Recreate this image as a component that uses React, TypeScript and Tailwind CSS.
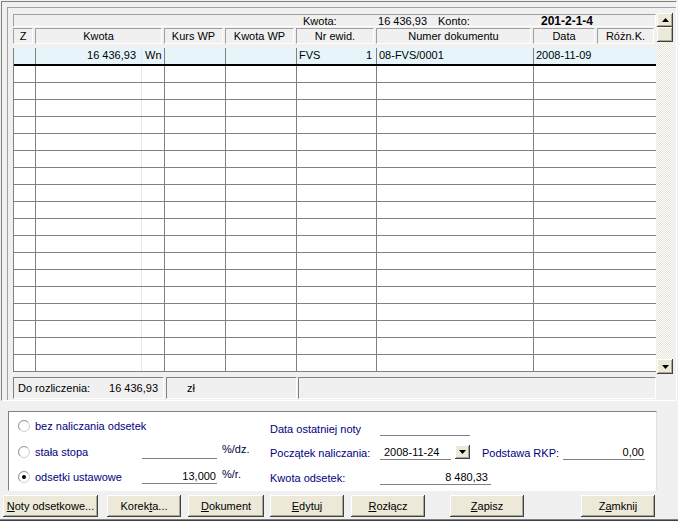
import React from "react";

const headers = [
  { label: "Z", w: "w-[22px]" },
  { label: "Kwota", w: "w-[129px]" },
  { label: "Kurs WP", w: "w-[61px]" },
  { label: "Kwota WP", w: "w-[71px]" },
  { label: "Nr ewid.", w: "w-[80px]" },
  { label: "Numer dokumentu", w: "w-[157px]" },
  { label: "Data", w: "w-[64px]" },
  { label: "Różn.K.", w: "w-[59px]" },
];

const btn3d =
  "bg-[#ece9d8] shadow-[inset_-1px_-1px_#404040,inset_1px_1px_#ffffff,inset_-2px_-2px_#aca899]";

const Radio = ({ checked }: { checked?: boolean }) => (
  <svg width="12" height="12" viewBox="0 0 12 12">
    <circle cx="6" cy="6" r="5.5" fill="#ffffff" stroke="#d4d0c8" />
    <path d="M2.1 9.9 A5.5 5.5 0 0 1 9.9 2.1" fill="none" stroke="#9a9a9a" />
    {checked && <circle cx="6" cy="6" r="2" fill="#000000" />}
  </svg>
);

const Arrow = ({ up }: { up?: boolean }) => (
  <svg width="7" height="4" viewBox="0 0 7 4">
    <polygon points={up ? "3.5,0 7,4 0,4" : "0,0 7,0 3.5,4"} fill="#000000" />
  </svg>
);

const GridRow = ({ first }: { first?: boolean }) => (
  <div
    className={
      first
        ? "flex h-[18px] bg-[#e7f5fb] border-b-2 border-black"
        : "flex h-[17px] bg-white border-b border-[#808080]"
    }
  >
    <div className="w-[22px] border-r border-[#808080]" />
    <div className="w-[106px] border-r border-[#e8e8e8] text-right pr-[5px] leading-[15px]">
      {first ? "16 436,93" : ""}
    </div>
    <div className="w-[23px] border-r border-[#808080] pl-[3px] leading-[15px]">
      {first ? "Wn" : ""}
    </div>
    <div className="w-[61px] border-r border-[#808080]" />
    <div className="w-[71px] border-r border-[#808080]" />
    <div className="w-[80px] border-r border-[#808080] flex justify-between pl-[2px] pr-[4px] leading-[15px]">
      {first && (
        <>
          <span>FVS</span>
          <span>1</span>
        </>
      )}
    </div>
    <div className="w-[157px] border-r border-[#808080] pl-[2px] leading-[15px]">
      {first ? "08-FVS/0001" : ""}
    </div>
    <div className="w-[122px] pl-[2px] leading-[15px]">{first ? "2008-11-09" : ""}</div>
  </div>
);

const Btn = ({ children, className }: { children: React.ReactNode; className: string }) => (
  <button className={`${btn3d} ${className} h-[22px] text-black text-[11px] flex items-center justify-center`}>
    {children}
  </button>
);

export default function App() {
  const empty = Array.from({ length: 18 });
  return (
    <div className="w-[678px] h-[521px] bg-[#f0f0f0] overflow-hidden flex flex-col font-['Liberation_Sans',Arial,sans-serif] text-[11px] text-black">
      {/* upper group */}
      <div className="h-[401px] pt-px pl-px">
        <div className="w-[676px] h-[400px] border-t border-l border-[#808080] border-r border-r-white border-b border-b-white pt-[5px] pl-[5px]">
          <div className="h-full border-t border-l border-[#a0a0a0] pt-[6px] pl-[5px]">
            <div className="flex">
              <div className="w-[643px] flex flex-col">
                {/* info row */}
                <div className="h-[13px] flex items-center border-t border-l border-[#a0a0a0] border-b border-b-white border-r border-r-white leading-[12px]">
                  <span className="ml-[289px] w-[60px]">Kwota:</span>
                  <span className="w-[64px] text-right">16 436,93</span>
                  <span className="ml-[11px] w-[103px]">Konto:</span>
                  <span className="font-bold text-[12px]">201-2-1-4</span>
                </div>
                {/* header */}
                <div className="flex mt-px h-[16px]">
                  {headers.map((h) => (
                    <div key={h.label} className={`${h.w} pr-[2px]`}>
                      <div className="h-full border-t border-l border-[#a0a0a0] border-b border-b-white border-r border-r-white text-center leading-[14px]">
                        {h.label}
                      </div>
                    </div>
                  ))}
                </div>
                {/* rows */}
                <div className="mt-[4px] border-l border-[#808080]">
                  <GridRow first />
                  {empty.map((_, i) => (
                    <GridRow key={i} />
                  ))}
                </div>
              </div>
              {/* scrollbar */}
              <div className="ml-px -mt-px w-[16px] h-[361px] flex flex-col">
                <div className={`${btn3d} h-[14px] flex items-center justify-center`}>
                  <Arrow up />
                </div>
                <div className={`${btn3d} h-[15px]`} />
                <div className="flex-1 bg-[image:repeating-conic-gradient(#ffffff_0%_25%,#e6e3d6_0%_50%)] bg-[length:2px_2px]" />
                <div className={`${btn3d} h-[15px] flex items-center justify-center`}>
                  <Arrow />
                </div>
              </div>
            </div>
            {/* status */}
            <div className="flex mt-[3px] h-[22px]">
              <div className="w-[151px] flex items-center justify-between pl-[4px] pr-[5px] border-t border-l border-[#808080] border-b border-b-white border-r border-r-white">
                <span>Do rozliczenia:</span>
                <span>16 436,93</span>
              </div>
              <div className="ml-[2px] w-[131px] flex items-center pl-[20px] border-t border-l border-[#808080] border-b border-b-white border-r border-r-white">
                zł
              </div>
              <div className="ml-px w-[358px] border-t border-l border-[#808080] border-b border-b-white border-r border-r-white" />
            </div>
          </div>
        </div>
      </div>

      {/* lower panel */}
      <div className="h-[10px]" />
      <div className="ml-[8px] w-[649px] h-[80px] bg-white border-t border-l border-[#808080] border-b border-b-white border-r border-r-[#e0e0e0] flex text-[#000080]">
        <div className="w-[261px] flex flex-col">
          <div className="h-[21px] flex items-end">
            <div className="h-[14px] flex items-center pl-[9px]">
              <Radio />
            </div>
            <span className="ml-[5px] leading-[14px]">bez naliczania odsetek</span>
          </div>
          <div className="h-[26px] flex items-end">
            <div className="h-[14px] flex items-center pl-[9px]">
              <Radio />
            </div>
            <span className="ml-[5px] w-[107px] leading-[14px]">stała stopa</span>
            <div className="w-[75px] h-[15px] border-b border-[#808080]" />
            <span className="ml-[5px] mb-[4px] leading-[11px] text-[#000040]">%/dz.</span>
          </div>
          <div className="h-[25px] flex items-end">
            <div className="h-[14px] flex items-center pl-[9px]">
              <Radio checked />
            </div>
            <span className="ml-[5px] w-[107px] leading-[14px]">odsetki ustawowe</span>
            <div className="w-[75px] h-[15px] border-b border-[#808080] text-right text-black leading-[14px] pr-px">
              13,000
            </div>
            <span className="ml-[5px] mb-[4px] leading-[11px] text-[#000040]">%/r.</span>
          </div>
        </div>
        <div className="flex flex-col">
          <div className="h-[24px] flex items-end">
            <span className="w-[110px] leading-[14px]">Data ostatniej noty</span>
            <div className="w-[90px] h-[15px] border-b border-[#808080]" />
          </div>
          <div className="h-[24px] flex items-end">
            <span className="w-[110px] leading-[14px]">Początek naliczania:</span>
            <div className="w-[71px] h-[15px] border-b border-[#808080] pl-[4px] text-black leading-[14px]">
              2008-11-24
            </div>
            <div className={`${btn3d} ml-[4px] mb-px w-[15px] h-[14px] flex items-center justify-center`}>
              <Arrow />
            </div>
            <span className="ml-[12px] w-[81px] leading-[14px]">Podstawa RKP:</span>
            <div className="w-[82px] h-[15px] border-b border-[#808080] text-right pr-px text-black leading-[14px]">
              0,00
            </div>
          </div>
          <div className="h-[25px] flex items-end">
            <span className="w-[110px] leading-[14px]">Kwota odsetek:</span>
            <div className="w-[111px] h-[15px] border-b border-[#808080] text-right pr-[3px] text-black leading-[14px]">
              8 480,33
            </div>
          </div>
        </div>
      </div>

      {/* buttons */}
      <div className="h-[4px]" />
      <div className="flex pl-[3px] h-[22px]">
        <Btn className="w-[95px]">
          <span><u>N</u>oty odsetkowe...</span>
        </Btn>
        <Btn className="ml-[9px] w-[74px]">
          <span>Korek<u>t</u>a...</span>
        </Btn>
        <Btn className="ml-[7px] w-[76px]">
          <span><u>D</u>okument</span>
        </Btn>
        <Btn className="ml-[6px] w-[74px]">
          <span><u>E</u>dytuj</span>
        </Btn>
        <Btn className="ml-[7px] w-[74px]">
          <span><u>R</u>ozłącz</span>
        </Btn>
        <Btn className="ml-[25px] w-[74px]">
          <span><u>Z</u>apisz</span>
        </Btn>
        <Btn className="ml-[57px] w-[74px]">
          <span>Z<u>a</u>mknij</span>
        </Btn>
      </div>
      <div className="h-[2px]" />
      <div className="h-[2px] border-t border-[#808080] bg-[#404040]" />
    </div>
  );
}
